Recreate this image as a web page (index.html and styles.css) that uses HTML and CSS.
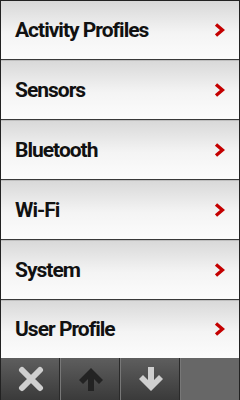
FILE: index.html
```html
<!DOCTYPE html>
<html>
<head>
<meta charset="utf-8">
<link rel="stylesheet" href="styles.css">
</head>
<body>
<div class="screen">
  <ul class="menu">
    <li class="row"><span class="label">Activity Profiles</span><svg class="chev" viewBox="0 0 11 14"><path d="M2 1.5 L8.5 7 L2 12.5" fill="none" stroke="#c40000" stroke-width="3.4" stroke-linejoin="miter"/></svg></li>
    <li class="row"><span class="label">Sensors</span><svg class="chev" viewBox="0 0 11 14"><path d="M2 1.5 L8.5 7 L2 12.5" fill="none" stroke="#c40000" stroke-width="3.4" stroke-linejoin="miter"/></svg></li>
    <li class="row"><span class="label">Bluetooth</span><svg class="chev" viewBox="0 0 11 14"><path d="M2 1.5 L8.5 7 L2 12.5" fill="none" stroke="#c40000" stroke-width="3.4" stroke-linejoin="miter"/></svg></li>
    <li class="row"><span class="label">Wi-Fi</span><svg class="chev" viewBox="0 0 11 14"><path d="M2 1.5 L8.5 7 L2 12.5" fill="none" stroke="#c40000" stroke-width="3.4" stroke-linejoin="miter"/></svg></li>
    <li class="row"><span class="label">System</span><svg class="chev" viewBox="0 0 11 14"><path d="M2 1.5 L8.5 7 L2 12.5" fill="none" stroke="#c40000" stroke-width="3.4" stroke-linejoin="miter"/></svg></li>
    <li class="row last"><span class="label">User Profile</span><svg class="chev" viewBox="0 0 11 14"><path d="M2 1.5 L8.5 7 L2 12.5" fill="none" stroke="#c40000" stroke-width="3.4" stroke-linejoin="miter"/></svg></li>
  </ul>
  <div class="toolbar">
    <div class="btn"><svg viewBox="0 0 26 26" width="26" height="26"><path d="M4 4 L22 22 M22 4 L4 22" stroke="#cfcfcf" stroke-width="6" stroke-linecap="round"/></svg></div>
    <div class="btn"><svg viewBox="0 0 26 26" width="26" height="26"><path d="M13 2 L25 14 L21 18 L16 13 L16 25 L10 25 L10 13 L5 18 L1 14 Z" fill="#232323"/></svg></div>
    <div class="btn"><svg viewBox="0 0 26 26" width="26" height="26"><path d="M13 25 L25 13 L21 9 L16 14 L16 1 L10 1 L10 14 L5 9 L1 13 Z" fill="#cfcfcf"/></svg></div>
    <div class="btn blank"></div>
  </div>
</div>
</body>
</html>
```
FILE: styles.css
```css
html, body {
  margin: 0;
  padding: 0;
  background: #000;
}
.screen {
  width: 240px;
  height: 400px;
  box-sizing: border-box;
  border: 1px solid #222;
  border-bottom: none;
  display: flex;
  flex-direction: column;
  background: #fff;
  overflow: hidden;
}
.menu {
  list-style: none;
  margin: 0;
  padding: 0;
}
.row {
  height: 60px;
  box-sizing: border-box;
  border-bottom: 1px solid #3a3a3a;
  display: flex;
  align-items: center;
  justify-content: space-between;
  padding: 0 14px 0 14px;
  background: linear-gradient(#d8d8d8, #f4f4f4 55%, #fcfcfc);
  box-shadow: inset 0 1px 0 #bdbdbd;
}
.row:first-child {
  height: 59px;
  box-shadow: none;
}
.row.last {
  height: 58px;
  border-bottom: none;
}
.label {
  font-family: Roboto, "Noto Sans", sans-serif;
  font-weight: 700;
  font-size: 21px;
  letter-spacing: -1px;
  color: #111;
}
.chev {
  width: 11px;
  height: 14px;
}
.toolbar {
  flex: 1;
  display: flex;
  background: #666;
}
.btn {
  width: 59px;
  flex: none;
  display: flex;
  align-items: center;
  justify-content: center;
  background: linear-gradient(#5e5e5e, #3a3a3a);
  border-right: 1px solid #777;
  box-shadow: inset -1px 0 0 #2a2a2a;
}
.btn.blank {
  flex: 1;
  background: #676767;
  border-right: none;
  box-shadow: none;
}
```
